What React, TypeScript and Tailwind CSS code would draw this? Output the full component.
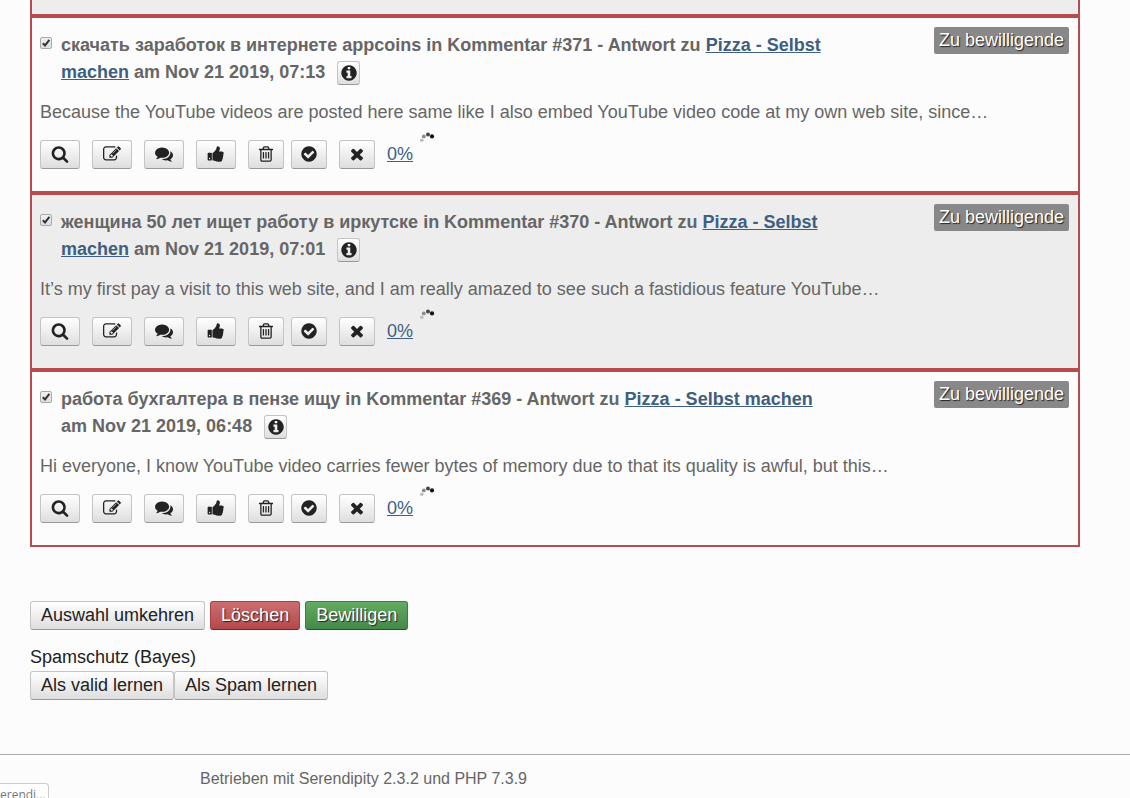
import clsx from "clsx";
import type { ReactNode } from "react";

const icons = {
  search:
    "M1216 832q0-185-131.5-316.5t-316.5-131.5-316.5 131.5-131.5 316.5 131.5 316.5 316.5 131.5 316.5-131.5 131.5-316.5zm512 832q0 52-38 90t-90 38q-54 0-90-38l-343-342q-179 124-399 124-143 0-273.5-55.5t-225-150-150-225-55.5-273.5 55.5-273.5 150-225 225-150 273.5-55.5 273.5 55.5 225 150 150 225 55.5 273.5q0 220-124 399l343 343q37 37 37 90z",
  edit: "M888 1184l116-116-152-152-116 116v56h96v96h56zm440-720q-16-16-33 1l-350 350q-17 17-1 33t33-1l350-350q17-17 1-33zm80 594v190q0 119-84.5 203.5t-203.5 84.5h-832q-119 0-203.5-84.5t-84.5-203.5v-832q0-119 84.5-203.5t203.5-84.5h832q63 0 117 25 15 7 18 23 3 17-9 29l-49 49q-14 14-32 8-23-6-45-6h-832q-66 0-113 47t-47 113v832q0 66 47 113t113 47h832q66 0 113-47t47-113v-126q0-13 9-22l64-64q15-15 35-7t20 29zm-96-738l288 288-672 672h-288v-288zm444 132l-92 92-288-288 92-92q28-28 68-28t68 28l152 152q28 28 28 68t-28 68z",
  chat: "M1408 768q0 139-94 257t-256.5 186.5-353.5 68.5q-86 0-176-16-124 88-278 128-36 9-86 16h-3q-11 0-20.5-8t-11.5-21q-1-3-1-6.5t.5-6.5 2-6l2.5-5 3.5-5.5 4-5 4.5-5 4-4.5q5-6 23-25t26-29.5 22.5-29 25-38.5 20.5-44q-124-72-195-177t-71-224q0-139 94-257t256.5-186.5 353.5-68.5 353.5 68.5 256.5 186.5 94 257zm384 256q0 120-71 224.5t-195 176.5q10 24 20.5 44t25 38.5 22.5 29 26 29.5 23 25q1 1 4 4.5t4.5 5 4 5 3.5 5.5l2.5 5 2 6 .5 6.5-1 6.5q-3 14-13 22t-22 7q-50-7-86-16-154-40-278-128-90 16-176 16-271 0-472-132 58 4 88 4 161 0 309-45t264-129q125-92 192-212t67-254q0-77-23-152 129 71 204 178t75 230z",
  thumbsUp:
    "M320 1344q0-26-19-45t-45-19q-27 0-45.5 19t-18.5 45q0 27 18.5 45.5t45.5 18.5q26 0 45-18.5t19-45.5zm160-512v640q0 26-19 45t-45 19h-288q-26 0-45-19t-19-45v-640q0-26 19-45t45-19h288q26 0 45 19t19 45zm1184 0q0 86-55 149 15 44 15 76 3 76-43 137 17 56 0 117-15 57-54 94 9 112-49 181-64 76-197 78h-129q-66 0-144-15.5t-121.5-29-120.5-39.5q-123-43-158-44-26-1-45-19.5t-19-44.5v-641q0-25 18-43.5t43-20.5q24-2 76-59t101-121q68-87 101-120 18-18 31-48t17.5-48.5 13.5-60.5q7-39 12.5-61t19.5-52 34-50q19-19 45-19 46 0 82.5 10.5t60 26 40 40.5 24 45 12 50 5 45 .5 39q0 38-9.5 76t-19 60-27.5 56q-3 6-10 18t-11 22-8 24h277q78 0 135 57t57 135z",
  trash:
    "M704 736v576q0 14-9 23t-23 9h-64q-14 0-23-9t-9-23v-576q0-14 9-23t23-9h64q14 0 23 9t9 23zm256 0v576q0 14-9 23t-23 9h-64q-14 0-23-9t-9-23v-576q0-14 9-23t23-9h64q14 0 23 9t9 23zm256 0v576q0 14-9 23t-23 9h-64q-14 0-23-9t-9-23v-576q0-14 9-23t23-9h64q14 0 23 9t9 23zm128 724v-948h-896v948q0 22 7 40.5t14.5 27 10.5 8.5h832q3 0 10.5-8.5t14.5-27 7-40.5zm-672-1076h448l-48-117q-7-9-17-11h-317q-10 2-17 11zm928 32v64q0 14-9 23t-23 9h-96v948q0 83-47 143.5t-113 60.5h-832q-66 0-113-58.5t-47-141.5v-952h-96q-14 0-23-9t-9-23v-64q0-14 9-23t23-9h309l70-167q15-37 54-63t79-26h320q40 0 79 26t54 63l70 167h309q14 0 23 9t9 23z",
  ok: "M1412 734q0-28-18-46l-91-90q-19-19-45-19t-45 19l-408 407-226-226q-19-19-45-19t-45 19l-91 90q-18 18-18 46 0 27 18 45l362 362q19 19 45 19 27 0 46-19l543-543q18-18 18-45zm252 162q0 209-103 385.5t-279.5 279.5-385.5 103-385.5-103-279.5-279.5-103-385.5 103-385.5 279.5-279.5 385.5-103 385.5 103 279.5 279.5 103 385.5z",
  cancel:
    "M1490 1322q0 40-28 68l-136 136q-28 28-68 28t-68-28l-294-294-294 294q-28 28-68 28t-68-28l-136-136q-28-28-28-68t28-68l294-294-294-294q-28-28-28-68t28-68l136-136q28-28 68-28t68 28l294 294 294-294q28-28 68-28t68 28l136 136q28 28 28 68t-28 68l-294 294 294 294q28 28 28 68z",
  info: "M1152 1376v-160q0-14-9-23t-23-9h-96v-512q0-14-9-23t-23-9h-320q-14 0-23 9t-9 23v160q0 14 9 23t23 9h96v320h-96q-14 0-23 9t-9 23v160q0 14 9 23t23 9h448q14 0 23-9t9-23zm-128-896v-160q0-14-9-23t-23-9h-192q-14 0-23 9t-9 23v160q0 14 9 23t23 9h192q14 0 23-9t9-23zm640 416q0 209-103 385.5t-279.5 279.5-385.5 103-385.5-103-279.5-279.5-103-385.5 103-385.5 279.5-279.5 385.5-103 385.5 103 279.5 279.5 103 385.5z",
};

type IconName = keyof typeof icons;

const comments = [
  {
    id: 371,
    author: "скачать заработок в интернете appcoins",
    date: "Nov 21 2019, 07:13",
    body: "Because the YouTube videos are posted here same like I also embed YouTube video code at my own web site, since…",
  },
  {
    id: 370,
    author: "женщина 50 лет ищет работу в иркутске",
    date: "Nov 21 2019, 07:01",
    body: "It’s my first pay a visit to this web site, and I am really amazed to see such a fastidious feature YouTube…",
  },
  {
    id: 369,
    author: "работа бухгалтера в пензе ищу",
    date: "Nov 21 2019, 06:48",
    body: "Hi everyone, I know YouTube video carries fewer bytes of memory due to that its quality is awful, but this…",
  },
];

const buttonBase = "rounded-[3px] border";
const buttonGray =
  "border-[#c4c4c4] border-b-[#999] bg-linear-to-b from-white to-[#dedede] text-[#222]";

function Icon({ name, className }: { name: IconName; className: string }) {
  return (
    <svg viewBox="0 0 1792 1792" fill="currentColor" aria-hidden="true" className={className}>
      <path d={icons[name]} />
    </svg>
  );
}

function IconButton({ name, label, wide }: { name: IconName; label: string; wide?: boolean }) {
  return (
    <button
      type="button"
      title={label}
      aria-label={label}
      className={clsx(
        buttonBase,
        buttonGray,
        "flex h-[29px] items-center justify-center pb-[1px]",
        wide ? "w-10" : "w-9"
      )}
    >
      <Icon name={name} className="size-[18px]" />
    </button>
  );
}

function TextButton({ children, className }: { children: ReactNode; className?: string }) {
  return (
    <button type="button" className={clsx(buttonBase, "px-[10px] leading-[27px]", className ?? buttonGray)}>
      {children}
    </button>
  );
}

function Checkbox({ id }: { id: string }) {
  return (
    <span className="relative mt-[5px] size-3 shrink-0">
      <input
        id={id}
        type="checkbox"
        defaultChecked
        className="peer block size-3 appearance-none rounded-[2px] border border-[#a9a9a9] bg-linear-to-b from-[#f0f0f0] to-[#dedede]"
      />
      <svg
        viewBox="0 0 12 12"
        fill="none"
        stroke="#333"
        strokeWidth="2"
        aria-hidden="true"
        className="pointer-events-none absolute inset-0 hidden peer-checked:block"
      >
        <path d="M2.8 6.2 5 8.4 9.4 2.8" />
      </svg>
    </span>
  );
}

function Spinner() {
  return (
    <svg viewBox="0 0 16 14" aria-hidden="true" className="absolute -top-[10px] left-full ml-[6px] h-[14px] w-4">
      <circle cx="2.8" cy="9.2" r="1.8" fill="#bdbdbd" />
      <circle cx="4.8" cy="5.4" r="1.9" fill="#8a8a8a" />
      <circle cx="9" cy="3.6" r="2" fill="#444" />
      <circle cx="13" cy="5.4" r="2.1" fill="#111" />
    </svg>
  );
}

function Comment({ comment, shaded }: { comment: (typeof comments)[number]; shaded: boolean }) {
  return (
    <li
      className={clsx(
        "border-2 border-[#b64b50] px-2 pt-[14px] pb-[22px] text-[#666]",
        shaded && "bg-[#ededed]"
      )}
    >
      <div className="flex items-start gap-[9px]">
        <Checkbox id={`comment-${comment.id}`} />
        <h4 className="max-w-3xl font-bold">
          <label htmlFor={`comment-${comment.id}`}>{comment.author}</label> in Kommentar #{comment.id} - Antwort zu{" "}
          <a href="#pizza" className="text-[#3e5f81] underline">
            Pizza - Selbst machen
          </a>{" "}
          am {comment.date}
          <button
            type="button"
            aria-label="Mehr"
            className={clsx(
              buttonBase,
              buttonGray,
              "-my-1 ml-3 inline-flex h-6 w-[23px] items-center justify-center pb-[1px] align-middle"
            )}
          >
            <Icon name="info" className="size-[18px] shrink-0" />
          </button>
        </h4>
        <span className="-mt-[5px] mr-[1px] ml-auto rounded-[2px] bg-[#888] px-[5px] text-white [text-shadow:1px_1px_1px_#222]">
          Zu bewilligende
        </span>
      </div>

      <p className="mt-[13px]">{comment.body}</p>

      <div className="mt-[14px] flex items-center gap-3">
        <IconButton name="search" label="Ansehen" wide />
        <IconButton name="edit" label="Bearbeiten" wide />
        <IconButton name="chat" label="Antworten" wide />
        <IconButton name="thumbsUp" label="Bewilligen" wide />
        <div className="flex gap-[7px]">
          <IconButton name="trash" label="Löschen" />
          <IconButton name="ok" label="Als valid lernen" />
        </div>
        <IconButton name="cancel" label="Als Spam lernen" />
        <div className="relative">
          <a href="#rating" className="text-[#3e5f81] underline">
            0%
          </a>
          <Spinner />
        </div>
      </div>
    </li>
  );
}

export default function App() {
  return (
    <div className="min-h-screen bg-[#fcfcfc] font-['Liberation_Sans',Arial,sans-serif] text-[18px] leading-[27px] text-[#222]">
      <main className="pr-[50px] pl-[30px]">
        <ul>
          {/* tail of the previous comment */}
          <li className="border-x-2 border-b-2 border-[#b64b50] bg-[#ededed] pt-[14px]" />
          {comments.map((comment, i) => (
            <Comment key={comment.id} comment={comment} shaded={i % 2 === 1} />
          ))}
        </ul>

        <div className="mt-[54px] flex gap-[5px]">
          <TextButton>Auswahl umkehren</TextButton>
          <TextButton className="border-[#a83f42] border-b-[#702a2c] bg-linear-to-b from-[#cb6e70] to-[#b5484b] text-white [text-shadow:1px_1px_1px_#222]">
            Löschen
          </TextButton>
          <TextButton className="border-[#3c7f40] border-b-[#275429] bg-linear-to-b from-[#62ab62] to-[#448a47] text-white [text-shadow:1px_1px_1px_#222]">
            Bewilligen
          </TextButton>
        </div>

        <fieldset className="mt-[14px]">
          <legend>Spamschutz (Bayes)</legend>
          <div className="flex">
            <TextButton>Als valid lernen</TextButton>
            <TextButton>Als Spam lernen</TextButton>
          </div>
        </fieldset>
      </main>

      <footer className="mt-[54px] border-t border-[#aaa] pt-3 pl-[200px] text-base text-[#666]">
        Betrieben mit Serendipity 2.3.2 und PHP 7.3.9
      </footer>

      {/* link preview in the window corner */}
      <div className="fixed bottom-0 left-0 h-[15px] w-[49px] overflow-hidden rounded-tr-[4px] border-t border-r border-[#ccc] bg-white font-['Open_Sans',sans-serif] text-[12px] leading-[22px] text-[#777]">
        erendi...
      </div>
    </div>
  );
}
